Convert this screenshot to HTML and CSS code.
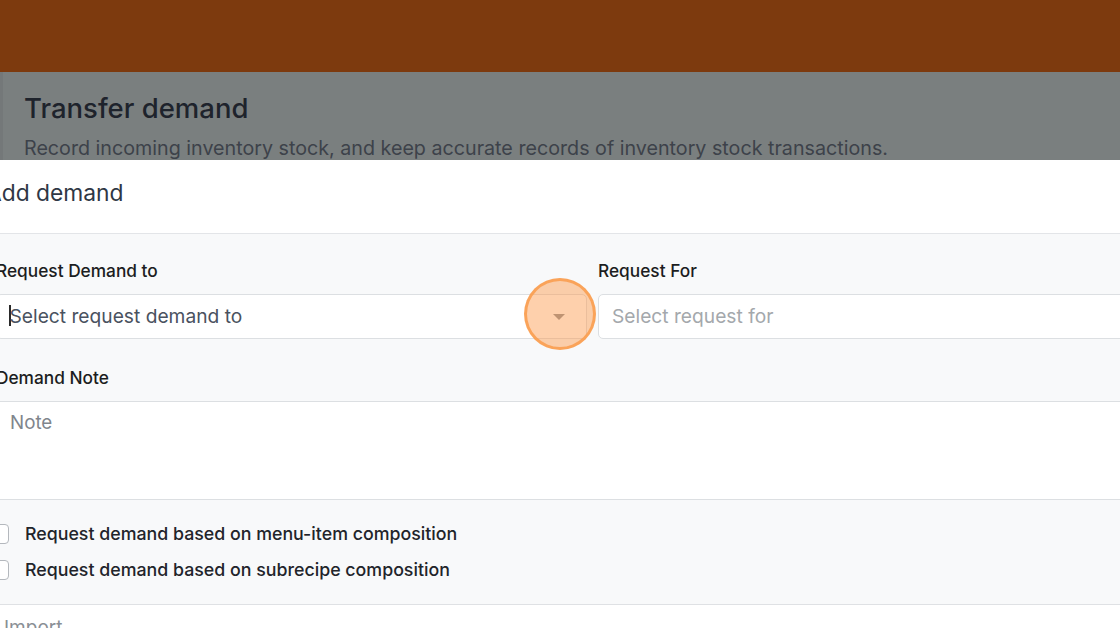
FILE: index.html
```html
<!DOCTYPE html>
<html lang="en">
<head>
  <meta charset="UTF-8">
  <meta name="viewport" content="width=device-width, initial-scale=1.0">
  <title>Transfer demand</title>
  <link rel="stylesheet" href="styles.css">
</head>
<body>

  <header class="topbar"></header>

  <section class="page-head">
    <h1>Transfer demand</h1>
    <p>Record incoming inventory stock, and keep accurate records of inventory stock transactions.</p>
  </section>

  <div class="modal">
    <div class="modal-header">
      <h2>Add demand</h2>
    </div>

    <form class="modal-body">
      <div class="field-row">
        <div class="field">
          <label>Request Demand to</label>
          <div class="select focused">
            <span class="cursor"></span>
            <span class="value">Select request demand to</span>
            <span class="caret"></span>
            <span class="click-ring"></span>
          </div>
        </div>
        <div class="field">
          <label>Request For</label>
          <div class="select">
            <span class="placeholder">Select request for</span>
          </div>
        </div>
      </div>

      <div class="field">
        <label>Demand Note</label>
        <div class="textarea"><span class="placeholder">Note</span></div>
      </div>

      <div class="options">
        <label class="check"><span class="box"></span>Request demand based on menu-item composition</label>
        <label class="check"><span class="box"></span>Request demand based on subrecipe composition</label>
      </div>
    </form>

    <div class="import">
      <span>Import</span>
    </div>
  </div>

</body>
</html>
```

FILE: styles.css
```css
html, body {
  margin: 0;
  padding: 0;
  overflow: hidden;
}

body {
  font-family: 'Inter', 'Liberation Sans', sans-serif;
  background: #7a7f7f;
  height: 628px;
}

.topbar {
  height: 72px;
  background: #7d3a0e;
}

.page-head {
  height: 88px;
  box-sizing: border-box;
  padding: 20px 24px 0;
  border-left: 3px solid #747879;
}

.page-head h1 {
  margin: 0 0 0 -3px;
  font-size: 27.5px;
  line-height: 32px;
  font-weight: 500;
  color: #1e232c;
}

.page-head p {
  margin: 12px 0 0 -3px;
  font-size: 19.7px;
  line-height: 24px;
  color: #3d424a;
  white-space: nowrap;
}

.modal {
  background: #fff;
  margin-left: -24px;
  width: 1233px;
}

.modal-header {
  padding: 19px 10px 26px;
  border-bottom: 1px solid #e3e5e8;
}

.modal-header h2 {
  margin: 0;
  font-size: 22.8px;
  line-height: 28px;
  font-weight: 400;
  color: #2f3745;
}

.modal-body {
  background: #f8f9fa;
  padding: 25px 20px 22px;
  border-bottom: 1px solid #dfe1e4;
}

.field-row {
  display: grid;
  grid-template-columns: 1fr 1fr;
  column-gap: 11px;
  margin-bottom: 27px;
}

.field label {
  display: block;
  font-size: 17.3px;
  line-height: 24px;
  font-weight: 500;
  color: #1c1d21;
  margin-bottom: 11px;
}

.select {
  position: relative;
  height: 45px;
  box-sizing: border-box;
  background: #fff;
  border: 1px solid #dcdfe2;
  border-radius: 5px;
  display: flex;
  align-items: center;
  padding: 0 13px 2px;
  font-size: 19.2px;
}

.select .placeholder {
  color: #a4a8ac;
}

.select .value {
  color: #4a5260;
  margin-left: -1px;
}

.cursor {
  width: 1.5px;
  height: 21px;
  background: #2a2a2a;
  margin-left: -1px;
}

.caret {
  position: absolute;
  right: 21px;
  top: 19px;
  width: 0;
  height: 0;
  border-left: 6px solid transparent;
  border-right: 6px solid transparent;
  border-top: 6px solid #8c9096;
}

.click-ring {
  position: absolute;
  right: -10px;
  top: -17px;
  width: 66px;
  height: 66px;
  border-radius: 50%;
  background: rgba(252, 150, 70, 0.45);
  border: 3px solid rgba(250, 158, 80, 0.9);
}

.textarea {
  height: 99px;
  box-sizing: border-box;
  background: #fff;
  border-top: 1px solid #dcdfe2;
  border-bottom: 1px solid #dcdfe2;
  margin-left: -20px;
  padding: 9px 34px;
  font-size: 18.8px;
  line-height: 24px;
}

.textarea .placeholder {
  color: #80858c;
}

.options {
  display: flex;
  flex-direction: column;
  gap: 12px;
  margin-top: 22px;
}

.options .check {
  display: flex;
  align-items: center;
  gap: 16px;
  font-size: 17.8px;
  line-height: 24px;
  font-weight: 500;
  color: #22242a;
  margin-left: -2px;
}

.box {
  width: 18px;
  height: 18px;
  border: 1px solid #b4b8bd;
  border-radius: 4px;
  background: #fff;
  margin-left: -5px;
}

.import {
  padding: 11px 28px;
  font-size: 19px;
  line-height: 24px;
  color: #8a8f95;
}
```
